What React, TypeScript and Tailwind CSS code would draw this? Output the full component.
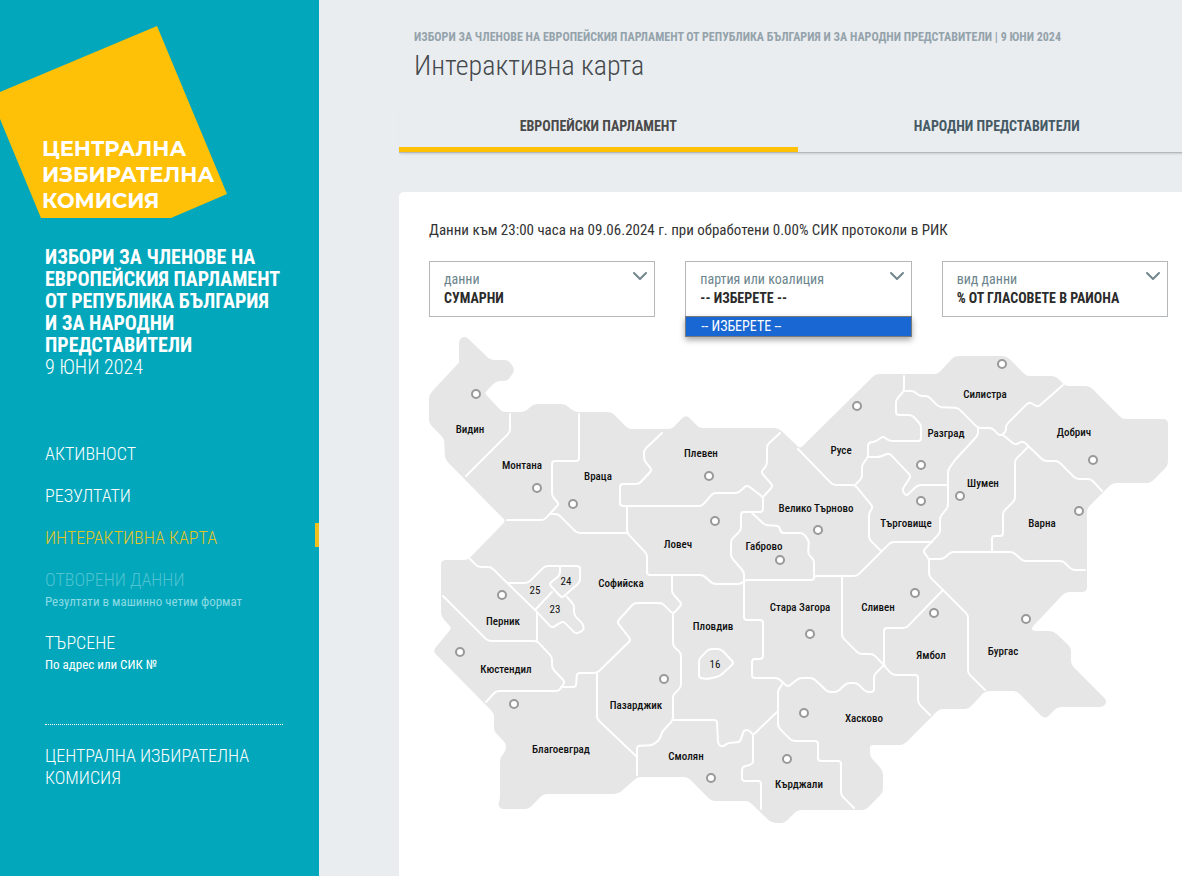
import { useState } from "react";
import { ChevronDown } from "lucide-react";
import clsx from "clsx";

type Point = [number, number];

const NAV = [
  { label: "АКТИВНОСТ" },
  { label: "РЕЗУЛТАТИ" },
  { label: "ИНТЕРАКТИВНА КАРТА", active: true },
  { label: "ОТВОРЕНИ ДАННИ", note: "Резултати в машинно четим формат", muted: true },
  { label: "ТЪРСЕНЕ", note: "По адрес или СИК №" },
];

const FILTERS = [
  { id: "data", label: "данни", value: "СУМАРНИ" },
  { id: "party", label: "партия или коалиция", value: "-- ИЗБЕРЕТЕ --", open: true },
  { id: "kind", label: "вид данни", value: "% ОТ ГЛАСОВЕТЕ В РАИОНА" },
];

const COUNTRY: Point[] = [
  [460, 380], [460, 363], [460, 340], [465, 337], [490, 361], [508, 361], [514, 370], [507, 380], [496, 380], [483, 393],
  [502, 413], [525, 413], [534, 405], [565, 405], [574, 413], [611, 413], [628, 430], [672, 430], [686, 416], [699, 429],
  [778, 429], [800, 450], [876, 375], [938, 375], [955, 357], [1006, 357], [1026, 377], [1055, 377], [1065, 387], [1089, 387],
  [1122, 420], [1167, 420], [1167, 465], [1150, 482], [1112, 482], [1086, 508], [1086, 591], [1065, 591], [1030, 628], [1032, 632],
  [1053, 632], [1070, 648], [1070, 665], [1106, 701], [1103, 706], [1057, 706], [1045, 718], [1017, 690], [985, 690], [968, 708],
  [939, 708], [903, 744], [869, 744], [869, 757], [882, 771], [882, 792], [865, 809], [797, 809], [784, 822], [772, 822],
  [749, 800], [712, 800], [688, 776], [637, 776], [618, 793], [543, 793], [528, 808], [501, 808], [499, 804], [501, 800],
  [501, 758], [507, 751], [507, 743], [495, 731], [495, 713], [434, 651], [453, 628], [442, 616], [442, 561], [468, 561],
  [507, 521], [446, 459], [445, 438], [430, 423], [430, 395], [460, 363],
];

const BORDERS: Point[][] = [
  [[510, 414], [510, 432], [466, 476]],
  [[579, 414], [579, 461], [552, 461], [552, 496], [559, 504], [544, 520], [507, 520]],
  [[550, 514], [558, 514], [577, 533], [627, 533]],
  [[662, 433], [644, 450], [644, 460], [652, 470], [639, 484], [620, 484], [620, 506], [702, 506], [713, 493], [738, 493], [747, 485], [763, 497], [763, 512], [741, 512], [741, 530], [731, 540], [731, 557], [744, 572], [744, 620], [763, 620], [763, 659], [752, 659], [752, 678], [778, 678], [788, 687], [799, 678], [813, 678], [828, 692], [837, 692], [847, 683], [857, 683], [866, 692], [874, 692], [874, 675], [884, 665]],
  [[884, 665], [873, 654], [859, 654], [842, 637], [842, 577]],
  [[627, 506], [627, 533], [647, 554], [647, 575], [703, 575], [713, 584], [741, 584], [745, 580], [814, 580], [814, 576], [857, 576], [891, 542], [932, 542]],
  [[780, 433], [767, 445], [767, 465], [761, 472], [773, 486], [763, 497]],
  [[798, 449], [833, 485], [855, 485], [873, 507], [869, 513], [869, 539], [881, 551]],
  [[904, 376], [904, 391], [896, 400], [896, 415], [912, 415], [921, 425], [921, 441], [889, 441], [883, 436], [877, 441], [868, 443], [868, 457], [862, 465], [862, 478], [855, 485]],
  [[904, 391], [914, 391], [919, 396], [928, 396], [939, 407], [958, 408], [978, 428], [992, 428], [1000, 436], [1006, 432], [1006, 425], [1029, 402], [1038, 407], [1063, 385]],
  [[978, 428], [978, 435], [955, 460], [948, 470], [948, 507], [940, 517], [940, 533], [923, 551], [929, 559], [929, 576], [968, 615], [968, 673], [985, 690]],
  [[1003, 435], [1015, 445], [1023, 441], [1044, 461], [1058, 461], [1076, 479], [1091, 479], [1102, 491]],
  [[1028, 447], [1015, 460], [1015, 500], [1003, 512], [1003, 536], [992, 536], [992, 552]],
  [[868, 457], [880, 457], [889, 453], [911, 476], [902, 490], [906, 496], [918, 485], [948, 485]],
  [[752, 513], [765, 525], [779, 526], [781, 533], [803, 533], [809, 541], [808, 554], [814, 560], [814, 576]],
  [[929, 559], [943, 559], [951, 552], [1013, 552], [1023, 561], [1063, 561], [1072, 570], [1085, 570]],
  [[943, 590], [906, 628], [884, 628], [884, 666], [893, 675], [918, 675], [918, 703], [930, 715]],
  [[470, 559], [478, 567], [491, 567], [535, 610], [552, 628], [563, 621], [576, 634], [584, 630], [583, 624], [574, 615], [574, 605], [567, 597]],
  [[508, 583], [528, 583], [545, 566], [580, 566], [580, 582], [562, 598], [549, 584], [560, 575], [560, 566]],
  [[535, 610], [552, 592]],
  [[443, 596], [488, 641], [537, 641], [552, 657], [552, 668], [565, 682], [559, 691], [496, 691], [486, 702]],
  [[537, 641], [537, 612]],
  [[561, 687], [576, 687], [577, 673], [597, 673], [631, 640], [617, 622], [634, 603], [662, 603], [673, 614], [682, 604], [672, 593], [672, 575]],
  [[673, 614], [673, 646], [681, 653], [681, 687], [673, 695], [673, 720], [662, 732], [660, 739], [653, 745], [637, 746], [637, 775]],
  [[597, 674], [597, 719], [637, 757]],
  [[673, 720], [717, 720], [718, 744], [722, 747], [728, 743], [740, 742], [744, 730], [749, 730], [753, 735], [778, 711]],
  [[783, 683], [778, 690], [778, 727], [792, 741], [818, 741], [818, 761], [841, 761], [841, 795], [854, 808]],
  [[753, 735], [753, 764], [742, 767], [742, 781], [761, 781], [761, 809]],
  [[699, 665], [699, 659], [709, 649], [721, 649], [734, 663], [720, 676], [708, 679], [699, 678], [699, 665]],
];

const REGIONS = [
  { name: "Видин", x: 470, y: 433, dot: [476, 394] },
  { name: "Монтана", x: 522, y: 469, dot: [537, 488] },
  { name: "Враца", x: 598, y: 480, dot: [573, 504] },
  { name: "Плевен", x: 701, y: 457, dot: [709, 476] },
  { name: "Велико Търново", x: 816, y: 512, dot: [818, 530] },
  { name: "Русе", x: 841, y: 454, dot: [857, 406] },
  { name: "Силистра", x: 985, y: 398, dot: [1002, 364] },
  { name: "Разград", x: 946, y: 437, dot: [921, 465] },
  { name: "Добрич", x: 1074, y: 436, dot: [1093, 460] },
  { name: "Шумен", x: 983, y: 487, dot: [960, 496] },
  { name: "Варна", x: 1042, y: 527, dot: [1079, 511] },
  { name: "Търговище", x: 906, y: 527, dot: [921, 501] },
  { name: "Ловеч", x: 678, y: 548, dot: [715, 521] },
  { name: "Габрово", x: 764, y: 550, dot: [780, 560] },
  { name: "Софийска", x: 621, y: 587 },
  { name: "Перник", x: 503, y: 625, dot: [502, 595] },
  { name: "Кюстендил", x: 506, y: 673, dot: [460, 652] },
  { name: "Благоевград", x: 561, y: 753, dot: [514, 704] },
  { name: "Пазарджик", x: 636, y: 709, dot: [664, 679] },
  { name: "Смолян", x: 686, y: 760, dot: [711, 778] },
  { name: "Пловдив", x: 713, y: 630 },
  { name: "Стара Загора", x: 800, y: 611, dot: [810, 634] },
  { name: "Сливен", x: 878, y: 611, dot: [915, 593] },
  { name: "Ямбол", x: 931, y: 659, dot: [934, 613] },
  { name: "Бургас", x: 1003, y: 655, dot: [1026, 619] },
  { name: "Хасково", x: 864, y: 722, dot: [804, 713] },
  { name: "Кърджали", x: 799, y: 788, dot: [787, 759] },
];

// city constituencies inside the larger regions
const CITIES = [
  { name: "25", x: 535, y: 594 },
  { name: "24", x: 566, y: 585 },
  { name: "23", x: 555, y: 613 },
  { name: "16", x: 715, y: 668 },
];

// softens every corner of a line with a small curve
function softPath(points: Point[], radius = 3) {
  let d = `M${points[0][0]} ${points[0][1]}`;
  for (let i = 1; i < points.length - 1; i++) {
    const [px, py] = points[i - 1];
    const [x, y] = points[i];
    const [nx, ny] = points[i + 1];
    const before = Math.hypot(px - x, py - y);
    const after = Math.hypot(nx - x, ny - y);
    const a = Math.min(radius, before / 2) / before;
    const b = Math.min(radius, after / 2) / after;
    d += `L${x + (px - x) * a} ${y + (py - y) * a}Q${x} ${y} ${x + (nx - x) * b} ${y + (ny - y) * b}`;
  }
  const last = points[points.length - 1];
  return `${d}L${last[0]} ${last[1]}`;
}

function Logo() {
  return (
    <svg viewBox="0 0 319 218" className="block w-full" role="img" aria-label="Централна избирателна комисия">
      <polygon points="0,92 157,26 227,194 171,218 41,218 0,119" fill="#ffc107" />
      <g className="fill-white font-['Montserrat','Inter',sans-serif] text-[21px] font-bold">
        <text x="42" y="156">ЦЕНТРАЛНА</text>
        <text x="42" y="182">ИЗБИРАТЕЛНА</text>
        <text x="42" y="208">КОМИСИЯ</text>
      </g>
    </svg>
  );
}

function Sidebar() {
  return (
    <aside className="w-[319px] shrink-0 bg-[#02a7bb] text-white">
      <Logo />

      <div className="pt-7 pl-[45px] pr-8 text-[20px] leading-[22px]">
        <p className="font-bold">
          ИЗБОРИ ЗА ЧЛЕНОВЕ НА<br />
          ЕВРОПЕЙСКИЯ ПАРЛАМЕНТ<br />
          ОТ РЕПУБЛИКА БЪЛГАРИЯ<br />
          И ЗА НАРОДНИ<br />
          ПРЕДСТАВИТЕЛИ
        </p>
        <p className="font-light">9 ЮНИ 2024</p>
      </div>

      <nav className="flex flex-col gap-3 pt-[61px]">
        {NAV.map((item) => (
          <a
            key={item.label}
            href="#"
            className={clsx("relative block pl-[45px]", item.active && "text-[#e3c51f]", item.muted && "text-[#4fc3d1]")}
          >
            <span className="block text-[18px] leading-[30px] font-light">{item.label}</span>
            {item.note && (
              <span className={clsx("block pb-[7px] text-[13px] leading-[14px]", item.muted && "text-[#8cdbe4]")}>
                {item.note}
              </span>
            )}
            {item.active && <span className="absolute top-0 right-0 h-6 w-1 bg-[#f3c11b]" />}
          </a>
        ))}
      </nav>

      <div className="mt-[45px] ml-[45px] mr-9 border-t border-dotted border-white pt-5">
        <a href="#" className="block text-[18px] leading-[22px] font-light">
          ЦЕНТРАЛНА ИЗБИРАТЕЛНА<br />
          КОМИСИЯ
        </a>
      </div>
    </aside>
  );
}

function Filter({ id, label, value, open }: (typeof FILTERS)[number]) {
  return (
    <div className="relative h-14 border border-[#b5b8ba] bg-white pt-2 pl-[14px]">
      <label htmlFor={id} className="block text-[14px] leading-[18px] text-[#6c858d]">
        {label}
      </label>
      <select
        id={id}
        defaultValue={value}
        className="block w-full appearance-none bg-transparent text-[14px] leading-5 font-bold text-[#2b2b2b] outline-none"
      >
        <option>{value}</option>
      </select>
      <ChevronDown className="pointer-events-none absolute top-[2px] right-[2px] h-6 w-6 text-[#71868d]" strokeWidth={2} />
      {open && (
        <ul className="absolute -right-px -left-px top-[54px] z-10 border border-[#7a7a7a] bg-[#1967d2] shadow-[0_3px_6px_rgba(0,0,0,0.35)]">
          <li className="pl-[15px] text-[14px] leading-[19px] text-white">-- ИЗБЕРЕТЕ --</li>
        </ul>
      )}
    </div>
  );
}

function RegionMap() {
  return (
    <svg viewBox="429 337 739 487" className="mt-5 block w-full" lang="bg">
      <path d={softPath(COUNTRY, 4)} fill="#e6e6e6" stroke="#e6e6e6" strokeWidth="2" strokeLinejoin="round" />
      <g fill="none" stroke="#fff" strokeWidth="2" strokeLinecap="round">
        {BORDERS.map((line, i) => (
          <path key={i} d={softPath(line)} />
        ))}
      </g>
      {REGIONS.map(({ name, x, y, dot }) => (
        <g key={name}>
          {dot && <circle cx={dot[0]} cy={dot[1]} r="4" fill="#fff" stroke="#999" strokeWidth="2" />}
          <text x={x} y={y} textAnchor="middle" className="fill-[#111] text-[11px] font-medium">
            {name}
          </text>
        </g>
      ))}
      {CITIES.map(({ name, x, y }) => (
        <text key={name} x={x} y={y} textAnchor="middle" className="fill-[#111] text-[11px]">
          {name}
        </text>
      ))}
    </svg>
  );
}

export default function App() {
  const [tab, setTab] = useState(0);

  return (
    <div className="flex min-h-screen overflow-hidden bg-[#eaedf0] font-['Roboto_Condensed','Liberation_Sans_Narrow',Roboto,sans-serif]">
      <Sidebar />

      <main className="-mr-[14px] flex min-w-0 flex-1 flex-col pl-20">
        {/* Heading */}
        <header className="pt-7 pl-[15px]">
          <p className="text-[12px] leading-[18px] font-bold text-[#94a3ab]">
            ИЗБОРИ ЗА ЧЛЕНОВЕ НА ЕВРОПЕЙСКИЯ ПАРЛАМЕНТ ОТ РЕПУБЛИКА БЪЛГАРИЯ И ЗА НАРОДНИ ПРЕДСТАВИТЕЛИ | 9 ЮНИ 2024
          </p>
          <h1 className="text-[28px] leading-10 font-light text-[#44494d]">Интерактивна карта</h1>
        </header>

        {/* Tabs */}
        <div
          className="mt-5 grid grid-cols-2 border-b border-[#b4b9bc] shadow-[0_2px_2px_-1px_rgba(0,0,0,0.15)]"
          role="tablist"
        >
          {["ЕВРОПЕЙСКИ ПАРЛАМЕНТ", "НАРОДНИ ПРЕДСТАВИТЕЛИ"].map((label, i) => (
            <button
              key={label}
              role="tab"
              aria-selected={tab === i}
              onClick={() => setTab(i)}
              className={clsx(
                "h-[46px] border-b-[5px] pb-px text-[14px] leading-5 font-bold",
                tab === i ? "border-[#ffc107] text-[#4a4a4a]" : "border-transparent text-[#455a64]"
              )}
            >
              {label}
            </button>
          ))}
        </div>

        {/* Map card */}
        <section className="mt-[39px] flex-1 rounded-t-[5px] bg-white pt-7 pr-7 pl-[30px]">
          <p className="text-[15px] leading-5 text-[#333]">
            Данни към 23:00 часа на 09.06.2024 г. при обработени 0.00% СИК протоколи в РИК
          </p>
          <div className="mt-[21px] grid grid-cols-3 gap-[30px]">
            {FILTERS.map((filter) => (
              <Filter key={filter.id} {...filter} />
            ))}
          </div>
          <RegionMap />
        </section>
      </main>
    </div>
  );
}
